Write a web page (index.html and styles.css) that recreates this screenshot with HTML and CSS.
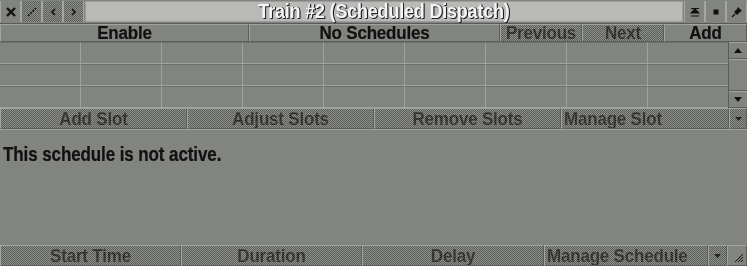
FILE: index.html
```html
<!DOCTYPE html>
<html>
<head>
<meta charset="utf-8">
<link rel="stylesheet" href="styles.css">
</head>
<body>
<div class="win">
  <div class="titlebar">
    <div class="tb plain"><svg width="12" height="12" viewBox="0 0 12 12"><path d="M2 2 L10 10 M10 2 L2 10" stroke="#111" stroke-width="2.4"/></svg></div>
    <div class="tb dith"><svg width="12" height="12" viewBox="0 0 12 12"><path d="M2 10 L10 2" stroke="#111" stroke-width="1.6" stroke-dasharray="2 1.2"/></svg></div>
    <div class="tb dith"><svg width="8" height="10" viewBox="0 0 8 10"><path d="M6 2 L3 5 L6 8" stroke="#111" stroke-width="1.6" fill="none"/></svg></div>
    <div class="tb dith"><svg width="8" height="10" viewBox="0 0 8 10"><path d="M2 2 L5 5 L2 8" stroke="#111" stroke-width="1.6" fill="none"/></svg></div>
    <div class="titlefield"><span class="titletext">Train #2 (Scheduled Dispatch)</span></div>
    <div class="tb plain"><svg width="10" height="10" viewBox="0 0 10 10"><path d="M1 1.5 H9 M5 2 L1 6 H9 Z M1 9 H9" stroke="#111" stroke-width="1.2" fill="#111"/></svg></div>
    <div class="tb plain"><svg width="6" height="6" viewBox="0 0 6 6"><rect x="0.5" y="0.5" width="5" height="5" fill="#111"/></svg></div>
    <div class="tb plain last"><svg width="12" height="12" viewBox="0 0 12 12"><path d="M7 1 L11 5 L9 6 L6 9 L5 8 L3 6 L6 3 Z" fill="#111"/><path d="M4 8 L1 11" stroke="#111" stroke-width="1.3"/></svg></div>
  </div>

  <div class="toprow">
    <div class="btn plain w-enable"><span class="lbl">Enable</span></div>
    <div class="btn plain w-nosched"><span class="lbl">No Schedules</span></div>
    <div class="btn dith w-prev"><span class="lbl dim">Previous</span></div>
    <div class="btn dith w-next"><span class="lbl dim">Next</span></div>
    <div class="btn plain w-add"><span class="lbl">Add</span></div>
  </div>

  <div class="gridarea">
    <div class="grid">
      <div class="cell"></div><div class="cell"></div><div class="cell"></div><div class="cell"></div><div class="cell"></div><div class="cell"></div><div class="cell"></div><div class="cell"></div><div class="cell"></div>
      <div class="cell"></div><div class="cell"></div><div class="cell"></div><div class="cell"></div><div class="cell"></div><div class="cell"></div><div class="cell"></div><div class="cell"></div><div class="cell"></div>
      <div class="cell"></div><div class="cell"></div><div class="cell"></div><div class="cell"></div><div class="cell"></div><div class="cell"></div><div class="cell"></div><div class="cell"></div><div class="cell"></div>
    </div>
    <div class="scroll">
      <div class="sbtn"><svg width="8" height="5" viewBox="0 0 8 5"><path d="M0 5 L4 0 L8 5 Z" fill="#111"/></svg></div>
      <div class="strack"></div>
      <div class="sbtn"><svg width="8" height="5" viewBox="0 0 8 5"><path d="M0 0 L4 5 L8 0 Z" fill="#111"/></svg></div>
    </div>
  </div>

  <div class="slotrow">
    <div class="btn dith w-slot"><span class="lbl dim">Add Slot</span></div>
    <div class="btn dith w-slot"><span class="lbl dim">Adjust Slots</span></div>
    <div class="btn dith w-slot"><span class="lbl dim">Remove Slots</span></div>
    <div class="btn dith w-mslot left"><span class="lbl dim">Manage Slot</span></div>
    <div class="btn dith w-drop"><svg width="7" height="4" viewBox="0 0 7 4"><path d="M0 0 L3.5 4 L7 0 Z" fill="#222"/></svg></div>
  </div>

  <div class="content">
    <p class="msg">This schedule is not active.</p>
  </div>

  <div class="bottomrow">
    <div class="btn dith w-b1"><span class="lbl dim">Start Time</span></div>
    <div class="btn dith w-b1"><span class="lbl dim">Duration</span></div>
    <div class="btn dith w-b2"><span class="lbl dim">Delay</span></div>
    <div class="btn dith w-msched left"><span class="lbl dim">Manage Schedule</span></div>
    <div class="btn dith w-drop2"><svg width="7" height="4" viewBox="0 0 7 4"><path d="M0 0 L3.5 4 L7 0 Z" fill="#222"/></svg></div>
    <div class="grip"><svg width="10" height="10" viewBox="0 0 10 10"><path d="M9 1 L1 9 M9 4 L4 9 M9 7 L7 9" stroke="#111" stroke-width="1"/></svg></div>
  </div>
</div>
</body>
</html>
```

FILE: styles.css
```css
html, body {
  margin: 0;
  padding: 0;
  background: #828480;
  overflow: hidden;
}
.win {
  width: 747px;
  height: 266px;
  display: flex;
  flex-direction: column;
  font-family: "Liberation Sans", Arial, sans-serif;
  font-weight: bold;
  color: #111;
  background: #828480;
}
.plain { background: #828480; }
.dith {
  background: repeating-conic-gradient(#5e605c 0 25%, #8c8e8a 0 50%) 0 0 / 2px 2px;
}
.titlebar {
  height: 23px;
  display: flex;
  border-bottom: 1px solid #5a5a5a;
  box-sizing: content-box;
}
.tb {
  width: 19px;
  height: 21px;
  margin-top: 1px;
  border-right: 1px solid #a4a6a2;
  border-left: 1px solid #a4a6a2;
  display: flex;
  align-items: center;
  justify-content: center;
  box-sizing: content-box;
}
.titlefield {
  flex: 1;
  height: 21px;
  margin: 1px 1px 0 1px;
  background: #b9bab7;
  border: 1px solid #9c9d9a;
  box-sizing: border-box;
  display: flex;
  align-items: center;
  justify-content: center;
}
.titletext {
  display: inline-block;
  font-size: 18px;
  color: #f4f4f4;
  text-shadow: 1px 1px 0 #222, 1px 0 0 #222;
  letter-spacing: -0.2px;
  line-height: 19px;
  transform: scaleY(1.1);
}
.toprow, .slotrow, .bottomrow {
  display: flex;
}
.toprow { height: 18px; }
.btn {
  height: 100%;
  box-sizing: border-box;
  border: 1px solid #5c5e5a;
  border-top-color: #a2a4a0;
  border-left-color: #a2a4a0;
  display: flex;
  align-items: center;
  justify-content: center;
}
.btn.left { justify-content: flex-start; padding-left: 2px; }
.lbl {
  display: inline-block;
  font-size: 17px;
  line-height: 17px;
  letter-spacing: -0.2px;
  white-space: nowrap;
  transform: scaleY(1.12);
  -webkit-text-stroke: 0.2px #111;
}
.toprow .lbl {
  line-height: 15px;
  transform: scaleY(1.06);
}
.dim {
  color: transparent;
  -webkit-text-stroke: 0;
  background: repeating-conic-gradient(#111 0 25%, #4a4a4a 0 50%) 0 0 / 2px 2px;
  -webkit-background-clip: text;
  background-clip: text;
}
.w-enable { width: 249px; }
.w-nosched { width: 251px; }
.w-prev { width: 82px; }
.w-next { width: 82px; }
.w-add { flex: 1; }

.gridarea {
  height: 66px;
  display: flex;
}
.grid {
  width: 728px;
  display: grid;
  grid-template-columns: repeat(9, 81px);
  grid-template-rows: repeat(3, 22px);
  overflow: hidden;
}
.cell {
  border-right: 1px solid #a0a29e;
  border-bottom: 1px solid #a0a29e;
  border-top: 1px solid #6e706c;
  box-sizing: border-box;
}
.scroll {
  flex: 1;
  display: flex;
  flex-direction: column;
  border-left: 1px solid #5c5e5a;
}
.sbtn {
  height: 17px;
  display: flex;
  align-items: center;
  justify-content: center;
  border-top: 1px solid #a2a4a0;
  border-bottom: 1px solid #5c5e5a;
  box-sizing: border-box;
}
.strack { flex: 1; border-bottom: 1px solid #5c5e5a; border-top: 1px solid #a2a4a0; }

.slotrow { height: 21px; }
.w-slot { width: 187px; }
.w-mslot { width: 168px; }
.w-drop { flex: 1; }

.content {
  flex: 1;
  border-top: 1px solid #a2a4a0;
}
.msg {
  display: inline-block;
  margin: 15px 0 0 3px;
  font-size: 17px;
  line-height: 17px;
  letter-spacing: -0.1px;
  transform: scaleY(1.15);
  transform-origin: left top;
  -webkit-text-stroke: 0.2px #111;
}

.bottomrow { height: 21px; }
.w-b1 { width: 181px; }
.w-b2 { width: 182px; }
.w-msched { width: 164px; }
.w-drop2 { width: 19px; }
.grip {
  flex: 1;
  display: flex;
  align-items: flex-end;
  justify-content: flex-end;
  padding: 0 2px 2px 0;
  border: 1px solid #5c5e5a;
  border-top-color: #a2a4a0;
  border-left-color: #a2a4a0;
}
```
